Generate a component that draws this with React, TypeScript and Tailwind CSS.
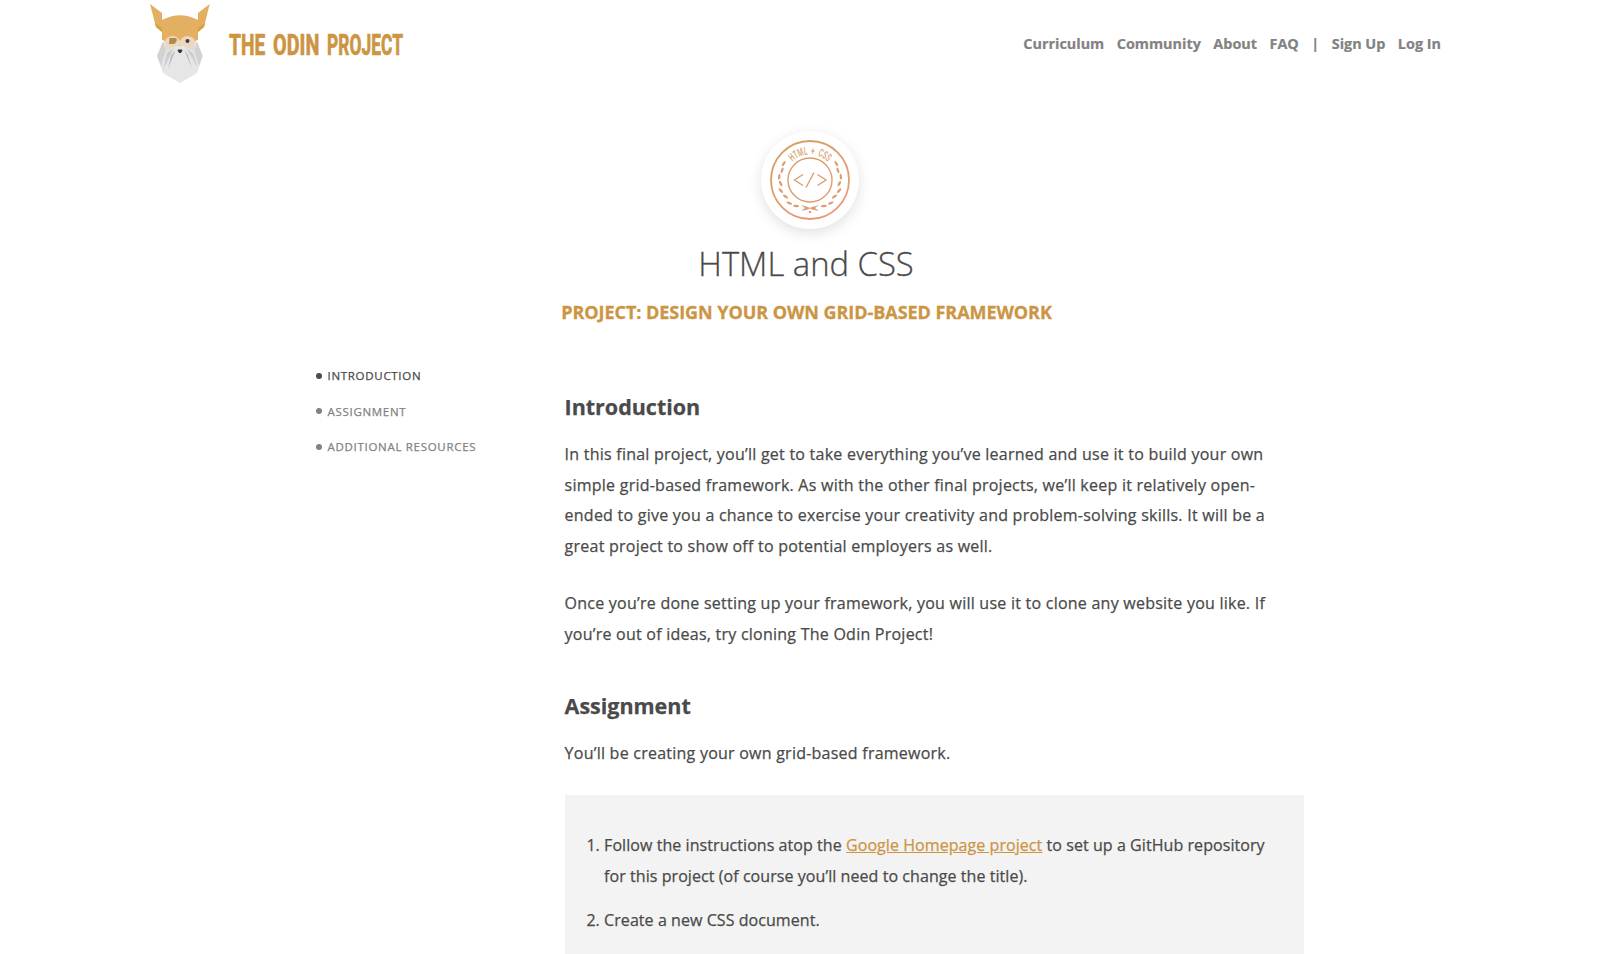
const leafAngles = [-32, -19, -6, 7, 20, 34, 48, 62];

function OdinHead() {
  return (
    <svg width="60" height="80" viewBox="5 4 60 80" className="shrink-0">
      <polygon points="20,40 12,56 18,73 35,83 52,73 57.5,56 50,40" fill="#e6e6e6" />
      <polygon points="18,41 12,56 16,66 21,50" fill="#d2d2d2" />
      <polygon points="52,41 57.7,56 54,66 49,50" fill="#d2d2d2" />
      <polygon points="29,48 22,53 18,70" fill="#cdcdcd" />
      <polygon points="31,49 26,56 23,69" fill="#bcbcbc" />
      <polygon points="39,49 43,55 47,69" fill="#bcbcbc" />
      <polygon points="41,48 48,53 53,68" fill="#cdcdcd" />
      <polygon points="5,4 17,13 17,32 11,27" fill="#e2b060" />
      <polygon points="64.7,4 53,13 53,32 59,27" fill="#e2b060" />
      <polygon points="10,23 17,28 17,32 11,27" fill="#dba044" />
      <polygon points="60,23 53,28 53,32 59,27" fill="#dba044" />
      <path d="M17 20 Q35 10.500 53 20 L53 40 L35 46 L17 40 Z" fill="#e2b060" />
      <path d="M20 42 Q21 36 28 36 Q33 36.500 35 41 Q37 36.500 42 36 Q49 36 50 42 L48 51 L40 46.500 Q35 44 30 46.500 L22 51 Z" fill="#ecd8c2" />
      <path d="M29 49 L35 45.500 L41 49 L38 60 H32 Z" fill="#e6e6e6" />
      <path d="M24.500 38 H31 Q32.500 39 31.500 41 Q30.500 44 28 44 H24 Z" fill="#b08c48" />
      <circle cx="42.500" cy="40.900" r="2" fill="#3d3d3d" />
      <path d="M33 49.500 H37 L37.300 51 L35.800 53 H34.200 L32.700 51 Z" fill="#343434" />
    </svg>
  );
}

function Wordmark() {
  return (
    <div className="ml-[19px] flex h-[30px] w-[174.500px] shrink-0 justify-between pt-[26px] font-['Roboto',sans-serif] text-[30px] leading-[30px] font-extrabold text-[#cc9543] [-webkit-text-stroke:0.5px]">
      <span className="w-[36.5px]">
        <span className="inline-block origin-left scale-x-[0.64]">THE</span>
      </span>
      <span className="w-[46.5px]">
        <span className="inline-block origin-left scale-x-[0.66]">ODIN</span>
      </span>
      <span className="w-[76.5px]">
        <span className="inline-block origin-left scale-x-[0.58]">PROJECT</span>
      </span>
    </div>
  );
}

function CourseBadge() {
  return (
    <div className="size-[98px] rounded-full bg-white shadow-[0_4px_14px_rgba(0,0,0,0.12)]">
      <svg width="98" height="98" viewBox="-49 -49 98 98" fill="none">
        <defs>
          <linearGradient id="copper" gradientUnits="userSpaceOnUse" x1="-30" y1="-30" x2="30" y2="30">
            <stop offset="0" stopColor="#d5a063" />
            <stop offset="1" stopColor="#e8997a" />
          </linearGradient>
          <path id="arc" d="M-25.500 0 A25.500 25.500 0 0 1 25.500 0" />
        </defs>
        <g stroke="url(#copper)">
          <circle r="39" strokeWidth="1.800" />
          <circle r="22" strokeWidth="1.400" />
          <path d="M-7 -5.500 L-15.500 0 L-7 5.500 M7.500 -5.500 L16 0 L7.500 5.500 M4 -7.500 L-4 7.500" strokeWidth="1.400" />
        </g>
        <g fill="url(#copper)">
          {leafAngles.map((a, i) => (
            <g key={a}>
              <ellipse rx="3" ry="1.200" transform={`rotate(${a}) translate(${i % 2 ? 29.5 : 31} 0) rotate(${a < 0 ? 90 : 112})`} />
              <ellipse rx="3" ry="1.200" transform={`scale(-1 1) rotate(${a}) translate(${i % 2 ? 29.5 : 31} 0) rotate(${a < 0 ? 90 : 112})`} />
            </g>
          ))}
          <path d="M-9 25 L-2 27 L0 28 L2 27 L9 25 L5 28 L9 31 L2 29.500 L0 28.500 L-2 29.500 L-9 31 L-5 28 Z" />
          <circle cy="32" r="1.300" />
          <text textAnchor="middle" className="font-['Roboto'] text-[11px] font-medium [word-spacing:3px]">
            <textPath href="#arc" startOffset="50%" textLength="39" lengthAdjust="spacingAndGlyphs">
              HTML + CSS
            </textPath>
          </text>
        </g>
      </svg>
    </div>
  );
}

const sections = ["Introduction", "Assignment", "Additional Resources"];

export default function App() {
  return (
    <div className="h-[954px] overflow-hidden bg-white font-['Open_Sans',sans-serif] text-[#4a4a4a]">
      <header className="mx-auto flex h-[88px] w-[1270px] justify-between">
        <a className="-ml-[21px] flex pt-1">
          <OdinHead />
          <Wordmark />
        </a>
        <nav className="flex items-center gap-[12.5px] text-[14.400px] font-bold text-[#828282] [-webkit-text-stroke:0.2px]">
          <a>Curriculum</a>
          <a>Community</a>
          <a>About</a>
          <a>FAQ</a>
          <span>|</span>
          <a>Sign Up</a>
          <a>Log In</a>
        </nav>
      </header>
      <div className="flex flex-col items-center pt-[43px]">
        <div className="pl-2">
          <CourseBadge />
        </div>
        <h1 className="mt-[10px] text-[32.800px] leading-[50px] font-light [-webkit-text-stroke:0.3px]">HTML and CSS</h1>
        <h2 className="mt-[10px] pl-px text-[18px] leading-[26px] font-bold tracking-[-0.05px] text-[#cc9543] uppercase [-webkit-text-stroke:0.3px]">
          Project: Design Your Own Grid-Based Framework
        </h2>
      </div>
      <div className="mx-auto flex w-[996px] pt-[33px] pl-2">
        <ul className="w-[248.600px] shrink-0 text-[11.500px] leading-[35.500px] tracking-[0.7px] uppercase [-webkit-text-stroke:0.25px]">
          {sections.map((s, i) => (
            <li key={s} className={i === 0 ? "flex items-center gap-[5.5px]" : "flex items-center gap-[5.5px] text-[#828282]"}>
              <span className="size-[6px] rounded-full bg-current" />
              {s}
            </li>
          ))}
        </ul>
        <main className="w-[739.400px] text-[16px] leading-[30.700px] tracking-[0.24px] [-webkit-text-stroke:0.25px]">
          <h3 className="mt-[34px] text-[21.500px] leading-[30px] font-bold tracking-[-0.02px]">Introduction</h3>
          <p className="mt-[17px]">
            In this final project, you’ll get to take everything you’ve learned and use it to build your own
            <br />
            simple grid-based framework. As with the other final projects, we’ll keep it relatively open-
            <br />
            ended to give you a chance to exercise your creativity and problem-solving skills. It will be a
            <br />
            great project to show off to potential employers as well.
          </p>
          <p className="mt-[26px]">
            Once you’re done setting up your framework, you will use it to clone any website you like. If
            <br />
            you’re out of ideas, try cloning The Odin Project!
          </p>
          <h3 className="mt-[42px] text-[21.500px] leading-[30px] font-bold tracking-[-0.02px]">Assignment</h3>
          <p className="mt-[17px]">You’ll be creating your own grid-based framework.</p>
          <div className="mt-[26px] h-[160px] bg-[#f3f3f3] pt-[35px] pl-[39.500px] tracking-[0.065px]">
            <ol className="list-decimal">
              <li>
                Follow the instructions atop the{" "}
                <a className="text-[#cc9543] underline">Google Homepage project</a> to set up a GitHub repository
                <br />
                for this project (of course you’ll need to change the title).
              </li>
              <li className="mt-[14px]">Create a new CSS document.</li>
            </ol>
          </div>
        </main>
      </div>
    </div>
  );
}
